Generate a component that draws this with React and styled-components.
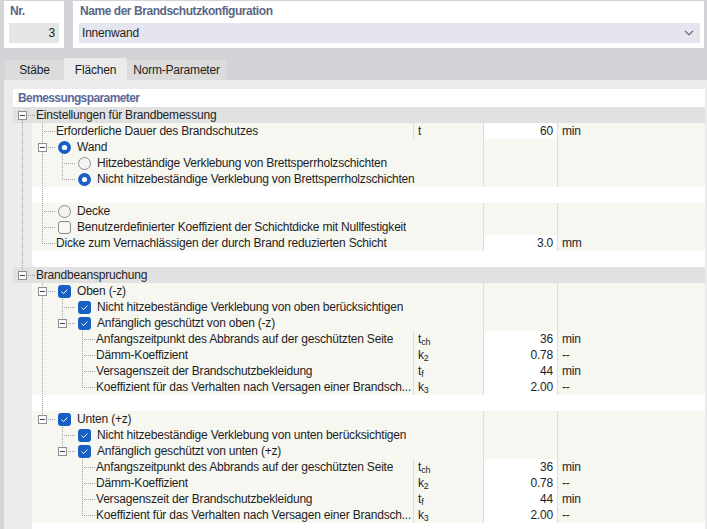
import React from "react";
import styled, { createGlobalStyle } from "styled-components";

const GlobalStyle = createGlobalStyle`
  body {
    margin: 0;
    background: #d4d4d8;
    font-family: "Liberation Sans", Arial, sans-serif;
    font-size: 12px;
    letter-spacing: -0.2px;
    color: #1e1e1e;
  }
`;

const rows = [
  { kind: "group", lines: ["boxFirst"], label: "Einstellungen für Brandbemessung" },
  { kind: "item", lines: ["pipe", "tee"], label: "Erforderliche Dauer des Brandschutzes", sym: "t", value: "60", unit: "min" },
  { kind: "item", lines: ["pipe", "boxMid"], control: "radioOn", label: "Wand" },
  { kind: "item", lines: ["pipe", "pipe", "tee"], control: "radioOff", label: "Hitzebeständige Verklebung von Brettsperrholzschichten" },
  { kind: "item", lines: ["pipe", "pipe", "elbow"], control: "radioOn", label: "Nicht hitzebeständige Verklebung von Brettsperrholzschichten" },
  { kind: "blank", lines: ["pipe", "pipe"] },
  { kind: "item", lines: ["pipe", "tee"], control: "radioOff", label: "Decke" },
  { kind: "item", lines: ["pipe", "tee"], control: "checkOff", label: "Benutzerdefinierter Koeffizient der Schichtdicke mit Nullfestigkeit" },
  { kind: "item", lines: ["pipe", "elbow"], label: "Dicke zum Vernachlässigen der durch Brand reduzierten Schicht", value: "3.0", unit: "mm" },
  { kind: "blank", lines: ["pipe"] },
  { kind: "group", lines: ["boxLast"], label: "Brandbeanspruchung" },
  { kind: "item", lines: ["", "boxMid"], control: "checkOn", label: "Oben (-z)" },
  { kind: "item", lines: ["", "pipe", "tee"], control: "checkOn", label: "Nicht hitzebeständige Verklebung von oben berücksichtigen" },
  { kind: "item", lines: ["", "pipe", "boxLast"], control: "checkOn", label: "Anfänglich geschützt von oben (-z)" },
  { kind: "item", lines: ["", "pipe", "", "tee"], label: "Anfangszeitpunkt des Abbrands auf der geschützten Seite", sym: "t", sub: "ch", value: "36", unit: "min" },
  { kind: "item", lines: ["", "pipe", "", "tee"], label: "Dämm-Koeffizient", sym: "k", sub: "2", value: "0.78", unit: "--" },
  { kind: "item", lines: ["", "pipe", "", "tee"], label: "Versagenszeit der Brandschutzbekleidung", sym: "t", sub: "f", value: "44", unit: "min" },
  { kind: "item", lines: ["", "pipe", "", "elbow"], label: "Koeffizient für das Verhalten nach Versagen einer Brandsch...", sym: "k", sub: "3", value: "2.00", unit: "--" },
  { kind: "blank", lines: ["", "pipe"] },
  { kind: "item", lines: ["", "boxLast"], control: "checkOn", label: "Unten (+z)" },
  { kind: "item", lines: ["", "", "tee"], control: "checkOn", label: "Nicht hitzebeständige Verklebung von unten berücksichtigen" },
  { kind: "item", lines: ["", "", "boxLast"], control: "checkOn", label: "Anfänglich geschützt von unten (+z)" },
  { kind: "item", lines: ["", "", "", "tee"], label: "Anfangszeitpunkt des Abbrands auf der geschützten Seite", sym: "t", sub: "ch", value: "36", unit: "min" },
  { kind: "item", lines: ["", "", "", "tee"], label: "Dämm-Koeffizient", sym: "k", sub: "2", value: "0.78", unit: "--" },
  { kind: "item", lines: ["", "", "", "tee"], label: "Versagenszeit der Brandschutzbekleidung", sym: "t", sub: "f", value: "44", unit: "min" },
  { kind: "item", lines: ["", "", "", "elbow"], label: "Koeffizient für das Verhalten nach Versagen einer Brandsch...", sym: "k", sub: "3", value: "2.00", unit: "--" },
  { kind: "blank", lines: [] },
];

const DOT = "#a3a3a3";

// tree connector drawing for one indent slot
function Lines({ type, w = 20, cx = 10 }) {
  const x = cx + 0.5;
  const box = type && type.startsWith("box");
  return (
    <svg width={w} height="16" shapeRendering="crispEdges" style={{ display: "block", flex: "none" }}>
      {(type === "pipe" || type === "tee") && (
        <line x1={x} y1="0" x2={x} y2="16" stroke={DOT} strokeDasharray="1 1" />
      )}
      {type === "elbow" && <line x1={x} y1="0" x2={x} y2="9" stroke={DOT} strokeDasharray="1 1" />}
      {(type === "tee" || type === "elbow") && (
        <line x1={x + 1} y1="8.5" x2={w} y2="8.5" stroke={DOT} strokeDasharray="1 1" />
      )}
      {box && (
        <>
          {type !== "boxFirst" && <line x1={x} y1="0" x2={x} y2="4" stroke={DOT} strokeDasharray="1 1" />}
          {type !== "boxLast" && <line x1={x} y1="13" x2={x} y2="16" stroke={DOT} strokeDasharray="1 1" />}
          <line x1={cx + 6} y1="8.5" x2={w} y2="8.5" stroke={DOT} strokeDasharray="1 1" />
          <rect x={cx - 3.5} y="4.5" width="8" height="8" fill="#fbfbfb" stroke="#8e8e8e" />
          <line x1={cx - 2} y1="8.5" x2={cx + 3} y2="8.5" stroke="#444" />
        </>
      )}
    </svg>
  );
}

function Lead({ w }) {
  return (
    <svg width={w} height="16" shapeRendering="crispEdges" style={{ display: "block", flex: "none" }}>
      <line x1="0" y1="8.5" x2={w - 1} y2="8.5" stroke={DOT} strokeDasharray="1 1" />
    </svg>
  );
}

function Control({ type }) {
  const blue = "#195fc3";
  return (
    <ControlBox width="13" height="13" viewBox="0 0 13 13">
      {type === "radioOn" && (
        <>
          <circle cx="6.5" cy="6.5" r="6.5" fill={blue} />
          <circle cx="6.5" cy="6.5" r="2.6" fill="#fff" />
        </>
      )}
      {type === "radioOff" && <circle cx="6.5" cy="6.5" r="6" fill="#f4f4f4" stroke="#8a8a8a" />}
      {type === "checkOn" && (
        <>
          <rect x="0" y="0" width="13" height="13" rx="3" fill={blue} />
          <path d="M3.6 6.7 L5.6 8.6 L9.4 4.6" fill="none" stroke="#fff" strokeWidth="1" />
        </>
      )}
      {type === "checkOff" && <rect x="0.5" y="0.5" width="12" height="12" rx="2.5" fill="#f6f6f6" stroke="#8a8a8a" />}
    </ControlBox>
  );
}

export default function App() {
  return (
    <>
      <GlobalStyle />
      <TopRow>
        <NrPanel>
          <FieldLabel>Nr.</FieldLabel>
          <NrInput>3</NrInput>
        </NrPanel>
        <NamePanel>
          <FieldLabel>Name der Brandschutzkonfiguration</FieldLabel>
          <NameInput>
            <span>Innenwand</span>
            <svg width="10" height="6" viewBox="0 0 10 6">
              <path d="M1 0.8 L5 4.8 L9 0.8" fill="none" stroke="#555" strokeWidth="1.1" />
            </svg>
          </NameInput>
        </NamePanel>
      </TopRow>

      <TabBar>
        <Tab $w={59}>Stäbe</Tab>
        <Tab $w={63} $active>Flächen</Tab>
        <Tab $w={99}>Norm-Parameter</Tab>
      </TabBar>

      <Panel>
        <Header>Bemessungsparameter</Header>
        {rows.map((r, i) => (
          <Row key={i} $kind={r.kind}>
            <Gutter $kind={r.kind}>
              <Lines type={r.lines[0]} w={19} cx={9} />
            </Gutter>
            {r.kind === "group" && (
              <>
                <Lead w={4} />
                <GroupText>{r.label}</GroupText>
              </>
            )}
            {r.kind === "blank" && r.lines.slice(1).map((t, j) => <Lines key={j} type={t} />)}
            {r.kind === "item" && (
              <Cells>
                <NameCell $wide={!r.sym}>
                  {r.lines.slice(1).map((t, j) => (
                    <Lines key={j} type={t} />
                  ))}
                  <Lead w={r.control ? 5 : 4} />
                  {r.control && <Control type={r.control} />}
                  <Label>{r.label}</Label>
                </NameCell>
                {r.sym && (
                  <SymCell>
                    {r.sym}
                    {r.sub && <sub>{r.sub}</sub>}
                  </SymCell>
                )}
                <ValueCell $filled={!!r.value}>{r.value}</ValueCell>
                <UnitCell>{r.unit}</UnitCell>
              </Cells>
            )}
          </Row>
        ))}
      </Panel>
    </>
  );
}

const TopRow = styled.div`
  display: flex;
  padding-top: 1px;
  height: 47px;
`;

const NrPanel = styled.div`
  margin-left: 4px;
  width: 60px;
  background: #fff;
  padding: 2px 5px 0 5px;
  box-sizing: border-box;
`;

const NamePanel = styled.div`
  margin-left: 9px;
  width: 631px;
  background: #fff;
  padding: 2px 4px 0 6px;
  box-sizing: border-box;
`;

const FieldLabel = styled.div`
  height: 16px;
  line-height: 16px;
  padding-left: 1px;
  margin-bottom: 4px;
  font-weight: 700;
  letter-spacing: -0.45px;
  color: #5a6684;
  white-space: nowrap;
`;

const NrInput = styled.div`
  height: 20px;
  line-height: 20px;
  background: #e6e6e6;
  text-align: right;
  padding-right: 4px;
`;

const NameInput = styled.div`
  height: 20px;
  background: #e5e5f0;
  display: flex;
  align-items: center;
  justify-content: space-between;
  padding: 0 6px 0 3px;
`;

const TabBar = styled.div`
  display: flex;
  align-items: flex-end;
  height: 32px;
  padding-left: 5px;
`;

const Tab = styled.div`
  width: ${(p) => p.$w}px;
  height: ${(p) => (p.$active ? 22 : 20)}px;
  padding-top: ${(p) => (p.$active ? 2 : 0)}px;
  box-sizing: border-box;
  line-height: 20px;
  text-align: center;
  background: ${(p) => (p.$active ? "#ebebeb" : "#dcdcdc")};
`;

const Panel = styled.div`
  margin-left: 4px;
  height: 449px;
  overflow: hidden;
  background: #ebebeb;
  padding: 9px 2px 0 9px;
`;

const Header = styled.div`
  height: 18px;
  line-height: 18px;
  background: #fff;
  padding-left: 5px;
  font-weight: 700;
  letter-spacing: -0.6px;
  color: #5a6898;
`;

const rowBg = { group: "#e1e1e1", item: "#f7f7f2", blank: "#fff" };

const Row = styled.div`
  display: flex;
  height: 16px;
  line-height: 16px;
  background: ${(p) => rowBg[p.$kind]};
`;

const Gutter = styled.div`
  width: 19px;
  flex: none;
  background: ${(p) => (p.$kind === "group" ? "transparent" : "#ebebeb")};
`;

const GroupText = styled.span`
  white-space: nowrap;
`;

const Cells = styled.div`
  flex: 1;
  display: grid;
  grid-template-columns: 381px 70px 74px 1fr;
`;

const NameCell = styled.div`
  grid-column: ${(p) => (p.$wide ? "span 2" : "span 1")};
  display: flex;
  align-items: center;
  min-width: 0;
  overflow: hidden;
`;

const ControlBox = styled.svg`
  flex: none;
  display: block;
  margin-left: 1px;
  margin-right: 6px;
`;

const Label = styled.span`
  white-space: nowrap;
  overflow: hidden;
  text-overflow: ellipsis;
`;

const SymCell = styled.div`
  border-left: 1px solid #dedede;
  padding-left: 4px;
  white-space: nowrap;

  sub {
    font-size: 9px;
    vertical-align: -2px;
    line-height: 0;
  }
`;

const ValueCell = styled.div`
  border-left: 1px solid #dedede;
  background: ${(p) => (p.$filled ? "#fff" : "transparent")};
  text-align: right;
  padding-right: 4px;
`;

const UnitCell = styled.div`
  border-left: 1px solid #dedede;
  padding-left: 4px;
`;
